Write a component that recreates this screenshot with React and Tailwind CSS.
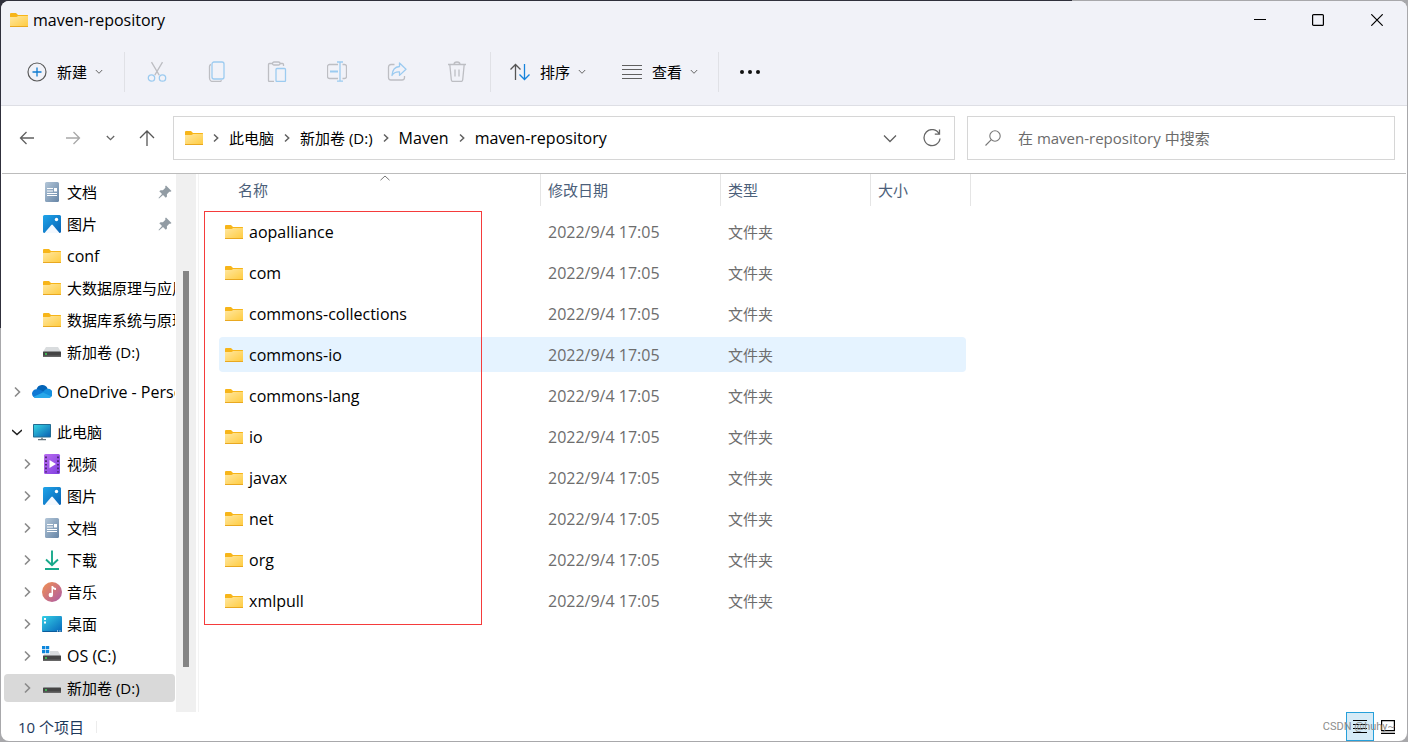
import { useState } from 'react';

const FolderIcon = () => (
  <svg width="18" height="14" viewBox="0 0 18 14" className="shrink-0">
    <defs>
      <linearGradient id="folderFront" x1="0" y1="0" x2="1" y2="1">
        <stop offset="0" stopColor="#ffe7a0" />
        <stop offset="1" stopColor="#ffcb3e" />
      </linearGradient>
    </defs>
    <path d="M0 1a1 1 0 0 1 1-1h5l2 2h9.500a.5.5 0 0 1 .5.5V6H0z" fill="#f7b519" />
    <path d="M0 4h6.500L8.200 3H18v10.500a.5.500 0 0 1-.5.5H.5a.5.5 0 0 1-.5-.5z" fill="url(#folderFront)" />
    <path d="M0 13h18v.5a.5.5 0 0 1-.5.5H.5a.5.5 0 0 1-.5-.5z" fill="#e9a820" />
  </svg>
);

const DocumentIcon = () => (
  <svg width="20" height="20" viewBox="0 0 20 20">
    <defs>
      <linearGradient id="docFill" x1="0" y1="0" x2="1" y2="1">
        <stop offset="0" stopColor="#b3c6d8" />
        <stop offset="1" stopColor="#6685a6" />
      </linearGradient>
    </defs>
    <rect x="3" width="14" height="20" rx="1.500" fill="url(#docFill)" />
    <path d="M5 6.500h6M5 9h6M5 11.500h10M5 13.500h10" stroke="#fff" strokeWidth="1.200" />
    <rect x="12" y="6" width="3" height="3.500" fill="#fff" />
  </svg>
);

const PictureIcon = () => (
  <svg width="20" height="20" viewBox="0 0 20 20">
    <defs>
      <linearGradient id="picFill" x1="0" y1="0" x2="1" y2="1">
        <stop offset="0" stopColor="#1fa5ea" />
        <stop offset="1" stopColor="#0862b4" />
      </linearGradient>
    </defs>
    <rect x="1" y="1" width="18" height="18" rx="1.500" fill="url(#picFill)" />
    <path d="M2.500 19l6.800-8a1 1 0 0 1 1.500 0l6.700 8z" fill="#f4f9ff" />
    <circle cx="14.500" cy="5.500" r="1.700" fill="#fff" />
  </svg>
);

const Drive = () => (
  <>
    <path d="M4 5h12l3 5H1z" fill="#d9dcde" />
    <rect x="1" y="9.500" width="18" height="5.500" rx=".6" fill="#454545" />
    <rect x="1" y="13.500" width="18" height="1.500" rx=".6" fill="#666" />
    <circle cx="4" cy="12" r=".9" fill="#3ee65a" />
  </>
);

const DriveIcon = () => (
  <svg width="20" height="20" viewBox="0 0 20 20">
    <Drive />
  </svg>
);

const SystemDriveIcon = () => (
  <svg width="20" height="20" viewBox="0 0 20 20">
    <Drive />
    <rect width="8" height="8" fill="#fff" />
    <path d="M0 0h3.300v3.300H0zM3.900 0h3.300v3.300H3.900zM0 3.900h3.300v3.300H0zM3.900 3.900h3.300v3.300H3.900z" fill="#0e86dc" />
  </svg>
);

const OneDriveIcon = () => (
  <svg width="20" height="20" viewBox="0 0 20 20">
    <path d="M4.500 7.500A5.800 5.800 0 0 1 15.600 6.700L11 13z" fill="#0364b8" />
    <path d="M4.300 16A4.400 4.400 0 0 1 4.500 7.200q2.500-.4 5.500 1.500l5 3.300-6 4z" fill="#0f78d4" />
    <path d="M10 11l2.500-2.800q1.500-1.700 3.500-1.500A4.600 4.600 0 0 1 16 16H9z" fill="#1490df" />
    <path d="M4.500 16a4.300 4.300 0 0 1-3-1.200L11 10.500l8.500 4.100A4 4 0 0 1 16 16z" fill="#28a8ea" />
  </svg>
);

const ComputerIcon = () => (
  <svg width="20" height="20" viewBox="0 0 20 20">
    <defs>
      <linearGradient id="screenFill" x1="0" y1="0" x2="1" y2="1">
        <stop offset="0" stopColor="#36d3e2" />
        <stop offset="1" stopColor="#0a62b4" />
      </linearGradient>
    </defs>
    <rect x="1" y="2" width="18" height="13.500" rx=".8" fill="#226c93" />
    <rect x="2" y="3" width="16" height="11.500" fill="url(#screenFill)" />
    <path d="M9 15.500h2V17H9z" fill="#8c979d" />
    <path d="M6 17h8v1.200H6z" fill="#66737b" />
  </svg>
);

const VideoIcon = () => (
  <svg width="20" height="20" viewBox="0 0 20 20">
    <defs>
      <linearGradient id="videoFill" x1="0" y1="0" x2="1" y2="1">
        <stop offset="0" stopColor="#ba6df0" />
        <stop offset="1" stopColor="#7f3ee0" />
      </linearGradient>
    </defs>
    <rect x="2" width="16" height="20" rx="1.500" fill="url(#videoFill)" />
    <path d="M4 2.500v16M16 2.500v16" stroke="#432266" strokeWidth="1.700" strokeDasharray="1.700 2" />
    <path d="M7.500 6l6.500 4-6.500 4z" fill="#fff" />
  </svg>
);

const DownloadIcon = () => (
  <svg width="20" height="20" viewBox="0 0 20 20" fill="none" stroke="#18a98b" strokeWidth="1.900">
    <path d="M10 .5V15M4 9.500l6 5.800 6-5.800M3 19h14" />
  </svg>
);

const MusicIcon = () => (
  <svg width="20" height="20" viewBox="0 0 20 20">
    <defs>
      <linearGradient id="musicFill" x1="0" y1="0" x2="1" y2="1">
        <stop offset="0" stopColor="#f2914f" />
        <stop offset="1" stopColor="#ac5aa8" />
      </linearGradient>
    </defs>
    <circle cx="10" cy="10" r="10" fill="url(#musicFill)" />
    <circle cx="8.800" cy="13" r="2.200" fill="#fff" />
    <path d="M9.500 4h1.400q.8 2 3.100 2v2q-1.800 0-3-.9V13H9.500z" fill="#fff" />
  </svg>
);

const DesktopIcon = () => (
  <svg width="20" height="20" viewBox="0 0 20 20">
    <defs>
      <linearGradient id="deskFill" x1="0" y1="0" x2="1" y2="1">
        <stop offset="0" stopColor="#35d0e6" />
        <stop offset="1" stopColor="#0766bb" />
      </linearGradient>
    </defs>
    <rect y="2" width="20" height="16" rx="1.200" fill="url(#deskFill)" />
    <path d="M2 4h2v2H2zM2 7.500h2v2H2z" fill="#fff" />
    <path d="M0 17h20v.5l-1 .5H1z" fill="#0b5c9c" />
    <path d="M15 17h1M17.500 17h1" stroke="#fff" strokeWidth="1.200" />
  </svg>
);

const PinIcon = () => (
  <svg width="14" height="14" viewBox="0 0 14 14" className="mr-[3px] shrink-0">
    <path d="M8 .5L13.500 6l-1 .8-1.200-.1-2.400 2.500.1 2.300-1.200 1.300L5 10 1 13.500.5 13 4 9 1.300 6.300l1.300-1.100 2.300.1 2.500-2.500L7.200 1.300z" fill="#929ca4" />
  </svg>
);

const Chevron = ({ open }) => (
  <svg width="10" height="12" viewBox="0 0 10 12" fill="none" strokeWidth="1.600" className={open ? 'stroke-[#222]' : 'stroke-[#8a8a8a]'}>
    {open ? <path d="M0 4l5 4.500L10 4" /> : <path d="M3 1.500L7.500 6 3 10.500" />}
  </svg>
);

const SmallDown = () => (
  <svg width="8" height="6" viewBox="0 0 8 6" fill="none" stroke="#666">
    <path d="M.8 1L4 4.300 7.200 1" />
  </svg>
);

const CrumbArrow = () => (
  <svg width="6" height="10" viewBox="0 0 6 10" fill="none" stroke="#606060" strokeWidth="1.500" className="shrink-0">
    <path d="M1 1.500L4.700 5 1 8.500" />
  </svg>
);

// Disabled toolbar actions, grey outline with a blue accent
const GREY = '#bdbec3';
const BLUE = '#9ccbf0';

const fileActions = [
  {
    name: '剪切',
    icon: (
      <>
        <path d="M4.500 1.200l7.700 13M15.500 1.200L7.800 14.200" stroke={GREY} />
        <circle cx="4.500" cy="17" r="3.200" stroke={BLUE} />
        <circle cx="15.500" cy="17" r="3.200" stroke={BLUE} />
      </>
    )
  },
  {
    name: '复制',
    icon: (
      <>
        <path d="M4 3.500a2 2 0 0 0-1.500 2V17a3.500 3.500 0 0 0 3.500 3.500h6.500a2 2 0 0 0 2-1.300" stroke={GREY} />
        <rect x="5" y="1" width="12" height="17" rx="2" stroke={BLUE} />
      </>
    )
  },
  {
    name: '粘贴',
    icon: (
      <>
        <path d="M6 2.500H2.500a1 1 0 0 0-1 1v16a1 1 0 0 0 1 1H7M13 2.500h2.500a1 1 0 0 1 1 1V5" stroke={GREY} />
        <rect x="5.500" y="1" width="7.500" height="3" rx="1.500" stroke={GREY} />
        <rect x="9" y="7.500" width="9.500" height="13" rx="1" stroke={BLUE} />
      </>
    )
  },
  {
    name: '重命名',
    icon: (
      <>
        <path d="M11 3.500H2.500a2 2 0 0 0-2 2v10a2 2 0 0 0 2 2H11M15.500 3.500h2a2 2 0 0 1 2 2v10a2 2 0 0 1-2 2h-2" stroke={GREY} />
        <path d="M13 1v19M10 1h6M10 20.200h6" stroke={BLUE} />
        <path d="M3 10.500h8" stroke={BLUE} strokeWidth="2" />
      </>
    )
  },
  {
    name: '共享',
    icon: (
      <>
        <path d="M7.500 3.500H4a2.500 2.500 0 0 0-2.500 2.500v10.500A2.500 2.500 0 0 0 4 19h11a2.500 2.500 0 0 0 2.500-2.500V15" stroke={GREY} />
        <path d="M12.500 2l6.500 6.200-6.500 6.200V11Q7.500 10.500 5 14.500q.5-8.500 7.500-9z" stroke={BLUE} strokeLinejoin="round" />
      </>
    )
  },
  {
    name: '删除',
    icon: (
      <>
        <path d="M1 3.500h18M7 3.500a3 2.500 0 0 1 6 0M2.800 3.500l1.500 15.200a2 2 0 0 0 2 1.800h7.400a2 2 0 0 0 2-1.800L17.200 3.500M8 8.500v7M12 8.500v7" stroke={GREY} />
      </>
    )
  }
];

const navItems = [
  { name: '文档', icon: <DocumentIcon />, level: 2, pinned: true },
  { name: '图片', icon: <PictureIcon />, level: 2, pinned: true },
  { name: 'conf', icon: <FolderIcon />, level: 2 },
  { name: '大数据原理与应用', icon: <FolderIcon />, level: 2 },
  { name: '数据库系统与原理', icon: <FolderIcon />, level: 2 },
  { name: '新加卷 (D:)', icon: <DriveIcon />, level: 2 },
  { name: 'OneDrive - Personal', icon: <OneDriveIcon />, level: 1, expandable: true },
  { name: '此电脑', icon: <ComputerIcon />, level: 1, expandable: true, open: true },
  { name: '视频', icon: <VideoIcon />, level: 2, expandable: true },
  { name: '图片', icon: <PictureIcon />, level: 2, expandable: true },
  { name: '文档', icon: <DocumentIcon />, level: 2, expandable: true },
  { name: '下载', icon: <DownloadIcon />, level: 2, expandable: true },
  { name: '音乐', icon: <MusicIcon />, level: 2, expandable: true },
  { name: '桌面', icon: <DesktopIcon />, level: 2, expandable: true },
  { name: 'OS (C:)', icon: <SystemDriveIcon />, level: 2, expandable: true },
  { name: '新加卷 (D:)', icon: <DriveIcon />, level: 2, expandable: true, active: true }
];

const crumbs = ['此电脑', '新加卷 (D:)', 'Maven', 'maven-repository'];

const folders = ['aopalliance', 'com', 'commons-collections', 'commons-io', 'commons-lang', 'io', 'javax', 'net', 'org', 'xmlpull'];

// Latin letters look smaller than the Chinese ones, so pure Latin names go one step up
const textSize = (text) => (/^[\x20-\x7e]+$/.test(text) ? 'text-[16px]' : 'text-[15px]');

const TitleBar = () => (
  <header className="flex h-[37px] items-center bg-[#f1f2f8] pr-px pl-[9px]">
    <FolderIcon />
    <h1 className="ml-[5px] flex-1 text-[16px]">maven-repository</h1>
    <button aria-label="最小化" className="flex h-full w-[58px] items-center justify-center">
      <svg width="12" height="12" viewBox="0 0 12 12" stroke="#000"><path d="M0 5.500h12" /></svg>
    </button>
    <button aria-label="最大化" className="flex h-full w-[58px] items-center justify-center">
      <svg width="12" height="12" viewBox="0 0 12 12" fill="none" stroke="#000" strokeWidth="1.200"><rect x=".6" y=".6" width="10.800" height="10.800" rx="1" /></svg>
    </button>
    <button aria-label="关闭" className="flex h-full w-[59px] items-center justify-center">
      <svg width="12" height="12" viewBox="0 0 12 12" stroke="#000" strokeWidth="1.200"><path d="M.3.300l11.400 11.400M11.700.300L.3 11.700" /></svg>
    </button>
  </header>
);

const Divider = () => <div className="h-10 w-px bg-[#e0e1e6]" />;

const Toolbar = () => (
  <div className="flex h-[68px] items-center border-b border-[#dedfe5] bg-[#f1f2f8]">
    <button className="flex h-10 items-center pr-[21px] pl-[26px]">
      <svg width="20" height="20" viewBox="0 0 20 20" fill="none">
        <circle cx="10" cy="10" r="9" stroke="#5a5a5a" strokeWidth="1.200" />
        <path d="M10 5.500v9M5.500 10h9" stroke="#0f7bd0" strokeWidth="1.300" />
      </svg>
      <span className="mr-2 ml-[10px]">新建</span>
      <SmallDown />
    </button>
    <Divider />
    <div className="mx-[2px] flex pr-px">
      {fileActions.map((action) => (
        <button key={action.name} aria-label={action.name} disabled className="flex h-10 w-[60px] items-center justify-center">
          <svg width="20" height="21" viewBox="0 0 20 21" fill="none" strokeWidth="1.300">{action.icon}</svg>
        </button>
      ))}
    </div>
    <Divider />
    <button className="flex h-10 items-center px-[19px]">
      <svg width="20" height="18" viewBox="0 0 20 18" fill="none" strokeWidth="1.300">
        <path d="M5.500 17V1.500M.5 6.500l5-5 5 5" stroke="#555" />
        <path d="M14.500 1v15.500M9.500 11.500l5 5 5-5" stroke="#1583dc" />
      </svg>
      <span className="mr-2 ml-[10px]">排序</span>
      <SmallDown />
    </button>
    <button className="flex h-10 items-center pr-5 pl-[17px]">
      <svg width="20" height="14" viewBox="0 0 20 14" stroke="#606060">
        <path d="M0 .5h20M0 4.500h20M0 9.500h20M0 13.500h20" />
      </svg>
      <span className="mr-2 ml-[10px]">查看</span>
      <SmallDown />
    </button>
    <Divider />
    <button aria-label="查看更多" className="flex h-10 items-center px-5">
      <svg width="22" height="4" viewBox="0 0 22 4" fill="#111">
        <circle cx="3" cy="2" r="2" />
        <circle cx="11" cy="2" r="2" />
        <circle cx="19" cy="2" r="2" />
      </svg>
    </button>
  </div>
);

const AddressBar = () => {
  const [query, setQuery] = useState('');

  return (
    <div className="mx-px flex items-center border-b border-[#bcbcbc] pt-[10px] pr-[11px] pb-[13px] pl-[17px]">
      <nav className="flex w-[154px] items-center">
        <button aria-label="后退" className="mr-8">
          <svg width="15" height="14" viewBox="0 0 15 14" fill="none" stroke="#606060" strokeWidth="1.300"><path d="M15 7H1.500M7.500 1L1.500 7l6 6" /></svg>
        </button>
        <button aria-label="前进" disabled className="mr-[25px]">
          <svg width="15" height="14" viewBox="0 0 15 14" fill="none" stroke="#a8a8a8" strokeWidth="1.300"><path d="M0 7h13.500M7.500 1l6 6-6 6" /></svg>
        </button>
        <button aria-label="最近浏览的位置" className="mr-6">
          <svg width="9" height="6" viewBox="0 0 9 6" fill="none" stroke="#666" strokeWidth="1.300"><path d="M.8 1l3.700 3.700L8.200 1" /></svg>
        </button>
        <button aria-label="上移">
          <svg width="16" height="16" viewBox="0 0 16 16" fill="none" stroke="#555" strokeWidth="1.300"><path d="M8 16V1M1 8l7-7 7 7" /></svg>
        </button>
      </nav>
      <div className="flex h-11 flex-1 items-center border border-[#d6d6d6] pl-[11px]">
        <FolderIcon />
        <ol className="flex flex-1 items-center">
          {crumbs.map((crumb) => (
            <li key={crumb} className="ml-[10px] flex items-center gap-[10px]">
              <CrumbArrow />
              <a href="#" className={textSize(crumb)}>{crumb}</a>
            </li>
          ))}
        </ol>
        <button aria-label="以前的位置" className="mr-[26px]">
          <svg width="14" height="9" viewBox="0 0 14 9" fill="none" stroke="#606060" strokeWidth="1.300"><path d="M1 1.500l6 6 6-6" /></svg>
        </button>
        <button aria-label="刷新" className="mr-[13px]">
          <svg width="18" height="18" viewBox="0 0 18 18" fill="none" stroke="#666" strokeWidth="1.300">
            <path d="M16.200 5A8 8 0 1 0 17 9.500M16.500.5v4.700h-4.700" />
          </svg>
        </button>
      </div>
      <div className="ml-3 flex h-11 w-[428px] items-center border border-[#d6d6d6] pl-[17px]">
        <svg width="16" height="16" viewBox="0 0 16 16" fill="none" stroke="#777" strokeWidth="1.100">
          <circle cx="10" cy="6" r="5.200" />
          <path d="M6.300 9.700L.5 15.500" />
        </svg>
        <input
          type="search"
          aria-label="搜索"
          value={query}
          onChange={(e) => setQuery(e.target.value)}
          placeholder="在 maven-repository 中搜索"
          className="ml-[17px] min-w-0 flex-1 outline-none placeholder:text-[#6b6b6b]"
        />
      </div>
    </div>
  );
};

const Sidebar = () => (
  <aside className="flex w-[195px]">
    <ul className="flex w-[175px] flex-col gap-1 pt-1 pr-px pb-[10px] pl-[3px]">
      {navItems.map((item, index) => (
        <li key={index} className={item.level === 1 ? 'mt-2' : ''}>
          <a
            href="#"
            className={`flex h-7 items-center overflow-hidden rounded-sm whitespace-nowrap ${item.level === 1 ? 'pl-2' : 'pl-[18px]'} ${item.active ? 'bg-[#d9d9d9]' : ''}`}
          >
            <span className="mr-[10px] w-[10px] shrink-0">{item.expandable && <Chevron open={item.open} />}</span>
            <span className="mr-[5px] flex w-5 shrink-0 justify-center">{item.icon}</span>
            <span className={`min-w-0 flex-1 overflow-hidden ${textSize(item.name)}`}>{item.name}</span>
            {item.pinned && <PinIcon />}
          </a>
        </li>
      ))}
    </ul>
    {/* Scrollbar */}
    <div className="flex w-5 justify-center bg-[#f0f0f0] pt-[97px] pb-[45px]">
      <div className="w-[6px] bg-[#858585]" />
    </div>
  </aside>
);

const FileTable = () => (
  <main className="relative ml-[2px] flex-1 border-l border-[#f3f3f3] pl-5">
    <table className="w-[752px] table-fixed text-left">
      <thead className="text-[#4c607a]">
        <tr className="h-[37px] align-top">
          <th className="relative w-[322px] font-normal">
            <div className="flex h-8 items-center border-r border-[#e5e5e5] pl-[19px]">名称</div>
            <svg width="10" height="6" viewBox="0 0 10 6" fill="none" stroke="#777" className="absolute top-px left-[161px]"><path d="M.5 5.200L5 1l4.500 4.200" /></svg>
          </th>
          <th className="w-[180px] font-normal"><div className="flex h-8 items-center border-r border-[#e5e5e5] pl-[7px]">修改日期</div></th>
          <th className="w-[150px] font-normal"><div className="flex h-8 items-center border-r border-[#e5e5e5] pl-[7px]">类型</div></th>
          <th className="w-[100px] font-normal"><div className="flex h-8 items-center border-r border-[#e5e5e5] pl-[7px]">大小</div></th>
        </tr>
      </thead>
      <tbody>
        {folders.map((name) => {
          const cell = `flex h-[35px] items-center ${name === 'commons-io' ? 'bg-[#e5f3ff]' : ''}`;

          return (
            <tr key={name} className="h-[41px] text-[#6d6d6d]">
              <td className="text-[16px] text-black"><div className={`rounded-l-sm pl-[6px] ${cell}`}><FolderIcon /><span className="ml-[6px]">{name}</span></div></td>
              <td className="text-[16px]"><div className={`pl-[7px] ${cell}`}>2022/9/4 17:05</div></td>
              <td><div className={`pl-[7px] ${cell}`}>文件夹</div></td>
              <td><div className={`mr-[5px] rounded-r-sm ${cell}`} /></td>
            </tr>
          );
        })}
      </tbody>
    </table>
    {/* Red frame drawn over the folder names */}
    <div className="pointer-events-none absolute top-[37px] left-[5px] h-[414px] w-[278px] border border-[#f53b3b]" />
  </main>
);

const StatusBar = () => (
  <footer className="relative flex h-[29px] items-center pr-[5px] pl-[17px] text-[#1e395b]">
    <span>10 个项目</span>
    <div className="ml-3 h-3 w-px bg-[#ececec]" />
    <button aria-label="详细信息" className="ml-auto flex h-[29px] w-7 items-center justify-center border border-[#26a0da] bg-[#d6ebf7]">
      <svg width="14" height="13" viewBox="0 0 14 13" stroke="#000"><path d="M0 .5h14M0 4.500h14M0 8.500h14M0 12.500h14" /></svg>
    </button>
    <button aria-label="大图标" className="flex h-[29px] w-7 items-center justify-center">
      <svg width="14" height="14" viewBox="0 0 14 14" fill="none" stroke="#000" strokeWidth="1.200"><path d="M.6.600h12.800v10H.6zM0 13.400h14" /></svg>
    </button>
    <span className="pointer-events-none absolute right-3 font-[Roboto] text-[11px] text-[#8d8d8d]">CSDN @huhy~</span>
  </footer>
);

const App = () => {
  return (
    <div
      lang="zh-CN"
      className="flex min-h-screen bg-[linear-gradient(163deg,#30303c_28%,#a8a8ab_28%)] p-px font-['Open_Sans','Noto_Sans_CJK_SC',sans-serif] text-[15px] leading-5 text-black"
    >
      <div className="flex min-w-0 flex-1 flex-col overflow-hidden rounded-lg bg-white">
        <TitleBar />
        <Toolbar />
        <AddressBar />
        <div className="flex flex-1">
          <Sidebar />
          <FileTable />
        </div>
        <StatusBar />
      </div>
    </div>
  );
};

export default App;
